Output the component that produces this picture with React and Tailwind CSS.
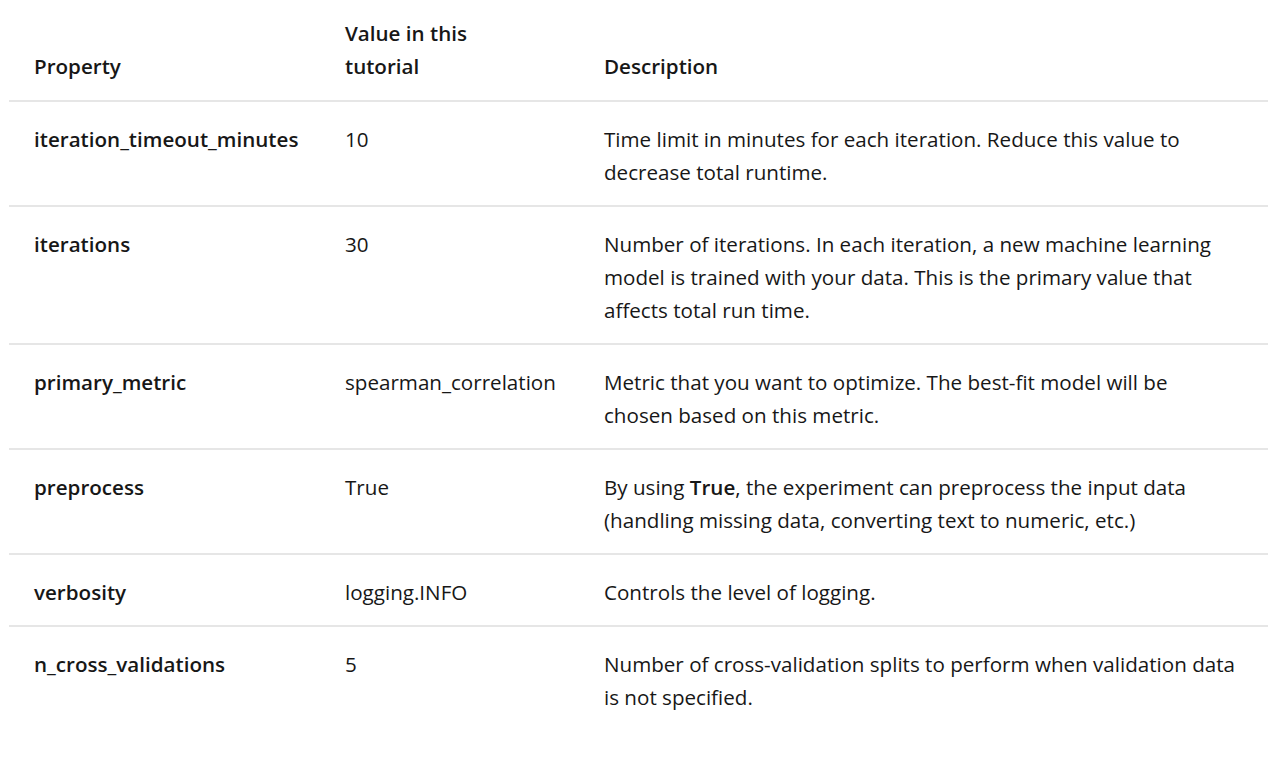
const rows = [
  {
    name: 'iteration_timeout_minutes',
    value: '10',
    description: 'Time limit in minutes for each iteration. Reduce this value to decrease total runtime.',
  },
  {
    name: 'iterations',
    value: '30',
    description:
      'Number of iterations. In each iteration, a new machine learning model is trained with your data. This is the primary value that affects total run time.',
  },
  {
    name: 'primary_metric',
    value: 'spearman_correlation',
    description: 'Metric that you want to optimize. The best-fit model will be chosen based on this metric.',
  },
  {
    name: 'preprocess',
    value: 'True',
    description: (
      <>
        By using <strong className="font-semibold">True</strong>, the experiment can preprocess the input data
        (handling missing data, converting text to numeric, etc.)
      </>
    ),
  },
  {
    name: 'verbosity',
    value: 'logging.INFO',
    description: 'Controls the level of logging.',
  },
  {
    name: 'n_cross_validations',
    value: '5',
    description: 'Number of cross-validation splits to perform when validation data is not specified.',
  },
];

export default function App() {
  return (
    <div
      className="min-h-screen bg-white px-[9px] pt-[17px] text-[#171717]"
      style={{ fontFamily: '"Open Sans", "Noto Sans", sans-serif' }}
    >
      <table className="w-[1259px] table-fixed border-collapse text-left text-[20.6px] leading-[33px]">
        <colgroup>
          <col className="w-[311px]" />
          <col className="w-[259px]" />
          <col />
        </colgroup>
        <thead>
          <tr className="border-b-2 border-[#e6e6e6]">
            <th className="pb-[17px] pl-[25px] pr-4 align-bottom font-semibold">Property</th>
            <th className="pb-[17px] pl-[25px] pr-4 align-bottom font-semibold">
              Value in this
              <br />
              tutorial
            </th>
            <th className="pb-[17px] pl-[25px] pr-[30px] align-bottom font-semibold">Description</th>
          </tr>
        </thead>
        <tbody>
          {rows.map((row, index) => (
            <tr
              key={row.name}
              className={index === rows.length - 1 ? '' : 'border-b-2 border-[#e6e6e6]'}
            >
              <td className="pt-[21px] pb-[16px] pl-[25px] pr-4 align-top font-semibold">{row.name}</td>
              <td className="pt-[21px] pb-[16px] pl-[25px] pr-4 align-top">{row.value}</td>
              <td className="pt-[21px] pb-[16px] pl-[25px] pr-[30px] align-top">{row.description}</td>
            </tr>
          ))}
        </tbody>
      </table>
    </div>
  );
}
